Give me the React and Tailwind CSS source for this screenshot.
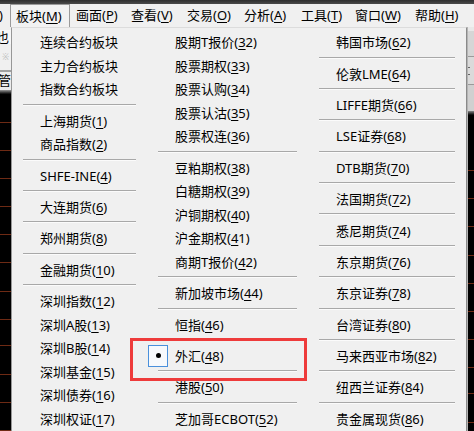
import React from "react";

const FONT = { fontFamily: '"Noto Sans", "Noto Sans CJK SC", sans-serif' };

function Label({ text }) {
  const i = text.indexOf("(");
  if (i < 0) return <>{text}</>;
  return (
    <>
      {text.slice(0, i + 1)}
      <span className="underline underline-offset-[2px] decoration-1">{text[i + 1]}</span>
      {text.slice(i + 2)}
    </>
  );
}

const S = "SEP";
const col1 = [
  "连续合约板块", "主力合约板块", "指数合约板块", S,
  "上海期货(1)", "商品指数(2)", S,
  "SHFE-INE(4)", S,
  "大连期货(6)", S,
  "郑州期货(8)", S,
  "金融期货(10)", S,
  "深圳指数(12)", "深圳A股(13)", "深圳B股(14)", "深圳基金(15)", "深圳债券(16)", "深圳权证(17)",
];
const col2 = [
  "股期T报价(32)", "股票期权(33)", "股票认购(34)", "股票认沽(35)", "股票权连(36)", S,
  "豆粕期权(38)", "白糖期权(39)", "沪铜期权(40)", "沪金期权(41)", "商期T报价(42)", S,
  "新加坡市场(44)", S,
  "恒指(46)", S,
  "外汇(48)", S,
  "港股(50)", S,
  "芝加哥ECBOT(52)",
];
const col3 = [
  "韩国市场(62)", S, "伦敦LME(64)", S, "LIFFE期货(66)", S, "LSE证券(68)", S,
  "DTB期货(70)", S, "法国期货(72)", S, "悉尼期货(74)", S, "东京期货(76)", S,
  "东京证券(78)", S, "台湾证券(80)", S, "马来西亚市场(82)", S, "纽西兰证券(84)", S,
  "贵金属现货(86)",
];

function Column({ items, width }) {
  return (
    <div className="flex flex-col shrink-0" style={{ width }}>
      {items.map((it, idx) =>
        it === S ? (
          <div key={idx} className="h-[8px] flex flex-col px-[11px]">
            <div className="mt-[2px] h-[1px] bg-[#a8a8a8]" />
            <div className="h-[1px] bg-[#fbfbfb]" />
          </div>
        ) : (
          <div key={idx} className="relative h-[24px] flex items-center pl-[28px] text-[13px] leading-none text-black whitespace-nowrap">
            {it === "外汇(48)" && (
              <div className="absolute left-[1px] top-0 w-[20px] h-[22px] border border-[#4a90dc] bg-[#f7f9fc] flex items-center justify-center">
                <div className="w-[5px] h-[5px] rounded-full bg-black" />
              </div>
            )}
            <span><Label text={it} /></span>
          </div>
        )
      )}
    </div>
  );
}

const menus = [
  ["画面(P)", 55],
  ["查看(V)", 56],
  ["交易(O)", 57],
  ["分析(A)", 57],
  ["工具(T)", 54],
  ["窗口(W)", 60],
  ["帮助(H)", 65],
];

const darkLines = [28, 28, 28.5, 28, 28, 28.5, 28, 26, 29, 28.5, 28];

function BlackArea({ first }) {
  return (
    <div className="flex-1 bg-black flex flex-col overflow-hidden relative">
      <div style={{ height: first }} className="shrink-0 border-b border-[#6e2a14]" />
      {darkLines.map((h, i) => (
        <div key={i} style={{ height: h }} className="shrink-0 border-b border-[#6e2a14]" />
      ))}
    </div>
  );
}

export default function App() {
  return (
    <div className="w-[474px] h-[431px] overflow-hidden bg-[#f0f0f0] flex flex-col relative" style={FONT}>
      {/* top dark strip */}
      <div className="h-[4px] bg-gradient-to-b from-[#2e2e2e] to-[#4a4a4a] shrink-0" />
      {/* menu bar */}
      <div className="h-[23px] flex shrink-0 text-[13px] text-black leading-none">
        <div className="w-[10px] overflow-hidden flex items-center">
          <span className="-ml-[1px]">)</span>
        </div>
        <div className="w-[60px] border-t border-l border-r border-[#9a9a9a] bg-[#f2f2f2] flex items-center pl-[5px] whitespace-nowrap">
          <Label text="板块(M)" />
        </div>
        {menus.map(([t, w]) => (
          <div key={t} className="flex items-center pl-[6px] whitespace-nowrap" style={{ width: w }}>
            <Label text={t} />
          </div>
        ))}
      </div>
      {/* body */}
      <div className="flex-1 flex min-h-0">
        {/* left strip */}
        <div className="w-[11px] shrink-0 flex flex-col overflow-hidden">
          <div className="h-[4px] bg-[#f0f0f0]" />
          <div className="h-[19px] bg-[#f7f7f7] flex items-center overflow-hidden">
            <span className="text-[13px] leading-none text-black -ml-[4px]">也</span>
          </div>
          <div className="h-[35px] bg-[#f0f0f0] flex items-center justify-end pr-[2px]">
            <span className="text-[8px] leading-none text-[#b8b8b8]">※</span>
          </div>
          <div className="h-[2px] bg-[#a0a0a0]" />
          <div className="h-[25px] bg-[#ececec] flex items-center overflow-hidden">
            <span className="text-[13px] leading-none text-black -ml-[2px]">管</span>
          </div>
          <div className="h-[6px] bg-gradient-to-b from-[#9a9a9a] to-black" />
          <div className="flex-1 relative flex flex-col">
            <span className="absolute left-[5px] top-[6px] text-[9px] leading-none text-white">*</span>
            <BlackArea first={28} />
          </div>
        </div>
        {/* dropdown menu */}
        <div className="flex shrink-0 border-l border-t border-[#979797] border-t-[#dcdcdc] border-r border-r-[#8a8a8a] bg-[#f0f0f0] pt-[3px]">
          <Column items={col1} width={135} />
          <Column items={col2} width={161} />
          <Column items={col3} width={158} />
        </div>
        <div className="w-[1px] shrink-0 bg-[#b4b4b4]" />
        {/* right strip */}
        <div className="w-[6px] shrink-0 flex flex-col overflow-hidden">
          <div className="h-[4px] bg-[#e8e8e8]" />
          <div className="h-[25px] bg-[#d6d6d6]" />
          <div className="h-[1px] bg-[#9a9a9a]" />
          <div className="h-[27px] bg-[#dadada] flex flex-col justify-center gap-[6px]">
            <div className="h-[1px] w-[2px] bg-[#666]" />
            <div className="h-[1px] w-[2px] bg-[#666]" />
          </div>
          <div className="h-[1px] bg-[#9a9a9a]" />
          <div className="h-[26px] bg-[#d0d0d0]" />
          <div className="h-[5px] bg-gradient-to-b from-[#8a8a8a] to-black" />
          <BlackArea first={55} />
        </div>
      </div>
      {/* red annotation box */}
      <div className="absolute left-[130px] top-[338px] w-[177px] h-[43px] border-[3px] border-[#ee3b3b] pointer-events-none" />
    </div>
  );
}
